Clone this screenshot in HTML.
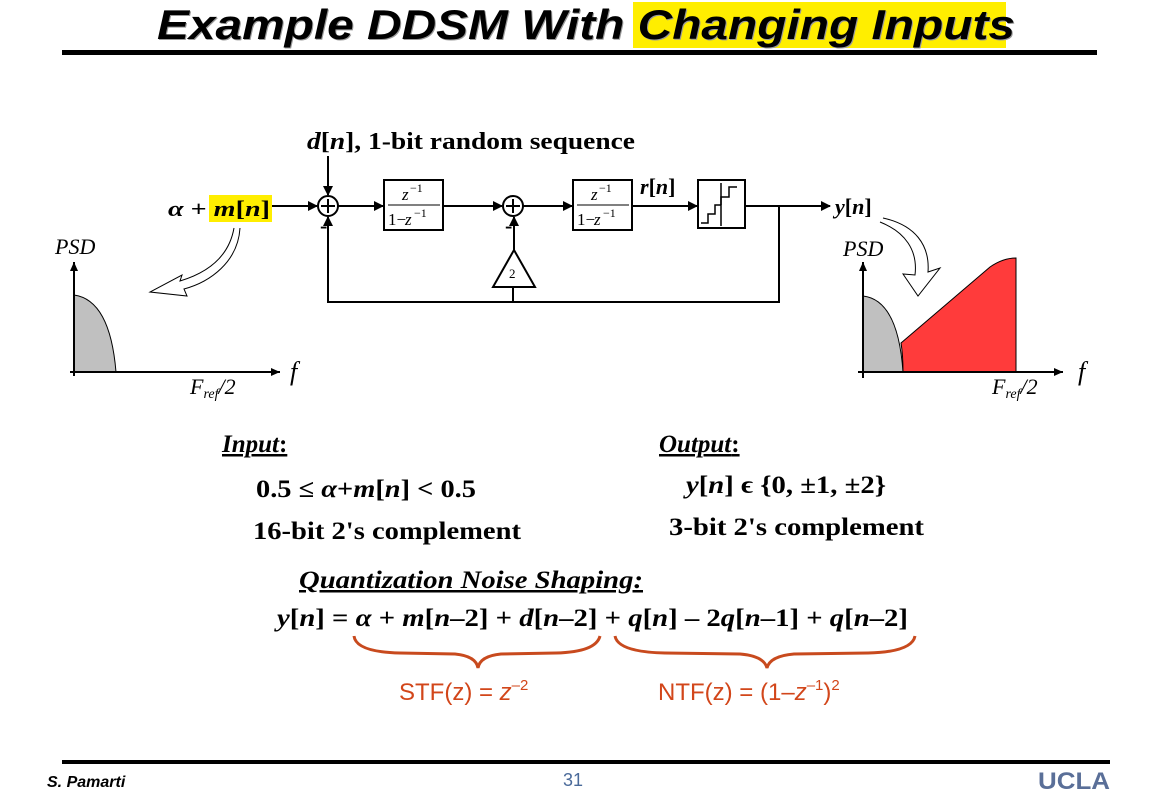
<!DOCTYPE html>
<html><head><meta charset="utf-8"><style>
html,body{margin:0;padding:0;background:#fff;width:1150px;height:804px;overflow:hidden}
svg{display:block}
.s{font-family:"Liberation Serif",serif;font-weight:bold}
.i{font-style:italic}
</style></head><body>
<svg width="1150" height="804" viewBox="0 0 1150 804" xmlns="http://www.w3.org/2000/svg">
<defs>
<marker id="ar" markerWidth="10" markerHeight="10" refX="9" refY="5" orient="auto" markerUnits="userSpaceOnUse"><path d="M0,0 L10,5 L0,10 Z" fill="#000"/></marker>
<marker id="as" markerWidth="10" markerHeight="10" refX="9" refY="4" orient="auto" markerUnits="userSpaceOnUse"><path d="M0,0 L9,4 L0,8 Z" fill="#000"/></marker>
</defs>
<!-- Title -->
<rect x="633" y="2" width="373" height="46" fill="#ffee00"/>
<text x="158" y="40" font-family="Liberation Sans,sans-serif" font-weight="bold" font-style="italic" font-size="42" fill="#999" textLength="858" lengthAdjust="spacingAndGlyphs">Example DDSM With Changing Inputs</text>
<text x="157" y="39" font-family="Liberation Sans,sans-serif" font-weight="bold" font-style="italic" font-size="42" fill="#000" textLength="858" lengthAdjust="spacingAndGlyphs">Example DDSM With Changing Inputs</text>
<rect x="62" y="50" width="1035" height="5" fill="#000"/>

<!-- Block diagram -->
<text x="307" y="149" class="s" font-size="24" textLength="328" lengthAdjust="spacingAndGlyphs"><tspan class="i">d</tspan>[<tspan class="i">n</tspan>], 1-bit random sequence</text>
<line x1="328" y1="156" x2="328" y2="195" stroke="#000" stroke-width="2" marker-end="url(#ar)"/>
<rect x="209" y="195" width="63" height="27" fill="#ffee00"/>
<text x="168" y="216" class="s" font-size="22" textLength="102" lengthAdjust="spacingAndGlyphs"><tspan class="i">α</tspan> + <tspan class="i">m</tspan>[<tspan class="i">n</tspan>]</text>
<g stroke="#000" stroke-width="2" fill="none">
<line x1="272" y1="206" x2="317" y2="206" marker-end="url(#ar)"/>
<circle cx="328" cy="206" r="10"/>
<line x1="321" y1="206" x2="335" y2="206"/><line x1="328" y1="199" x2="328" y2="213"/>
<line x1="338" y1="206" x2="383" y2="206" marker-end="url(#ar)"/>
<rect x="384" y="180" width="59" height="50"/>
<line x1="443" y1="206" x2="502" y2="206" marker-end="url(#ar)"/>
<circle cx="513" cy="206" r="10"/>
<line x1="506" y1="206" x2="520" y2="206"/><line x1="513" y1="199" x2="513" y2="213"/>
<line x1="523" y1="206" x2="572" y2="206" marker-end="url(#ar)"/>
<rect x="573" y="180" width="59" height="50"/>
<line x1="632" y1="206" x2="697" y2="206" marker-end="url(#ar)"/>
<rect x="698" y="180" width="47" height="48"/>
<line x1="745" y1="206" x2="830" y2="206" marker-end="url(#ar)"/>
<polyline points="779,206 779,302 328,302 328,217" marker-end="url(#ar)"/>
<line x1="513" y1="302" x2="513" y2="287"/>
<polygon points="493,287 535,287 514,250"/>
<line x1="514" y1="250" x2="514" y2="217" marker-end="url(#ar)"/>
<path d="M701,223 h7 v-9 h7 v-9 h6" stroke-width="1.5"/>
<path d="M721,205 v-8 h8 v-10 h8" stroke-width="1.5"/>
<line x1="721" y1="183" x2="721" y2="226" stroke-width="1.5"/>
<line x1="388" y1="205" x2="440" y2="205" stroke-width="1"/>
<line x1="577" y1="205" x2="629" y2="205" stroke-width="1"/>
</g>
<text x="320" y="233" class="s" font-size="22">-</text>
<text x="505" y="233" class="s" font-size="22">-</text>
<g font-family="Liberation Serif,serif" font-size="17">
<text x="402" y="200" font-style="italic">z</text><text x="410" y="192" font-size="12">−1</text>
<text x="388" y="225">1−</text><text x="405" y="225" font-style="italic">z</text><text x="414" y="217" font-size="12">−1</text>
<text x="591" y="200" font-style="italic">z</text><text x="599" y="192" font-size="12">−1</text>
<text x="577" y="225">1−</text><text x="594" y="225" font-style="italic">z</text><text x="603" y="217" font-size="12">−1</text>
<text x="509" y="278" font-size="13">2</text>
</g>
<text x="640" y="194" class="s" font-size="22"><tspan class="i">r</tspan>[<tspan class="i">n</tspan>]</text>
<text x="835" y="214" class="s" font-size="22"><tspan class="i">y</tspan>[<tspan class="i">n</tspan>]</text>

<!-- Left PSD -->
<path d="M74,372 V295 Q110,300 116,372 Z" fill="#c0c0c0" stroke="#000" stroke-width="1"/>
<line x1="74" y1="376" x2="74" y2="262" stroke="#000" stroke-width="2" marker-end="url(#as)"/>
<line x1="70" y1="372" x2="280" y2="372" stroke="#000" stroke-width="2" marker-end="url(#as)"/>
<text x="55" y="254" font-family="Liberation Serif,serif" font-style="italic" font-size="22">PSD</text>
<text x="290" y="380" font-family="Liberation Serif,serif" font-style="italic" font-size="26">f</text>
<text x="190" y="394" font-family="Liberation Serif,serif" font-style="italic" font-size="22">F<tspan font-size="14" dy="4">ref</tspan><tspan dy="-4">/2</tspan></text>
<path d="M234,228 C228,262 200,275 180,281 L182,275 L150,292 L187,296 L184,289 C210,282 238,262 240,228" fill="#fff" stroke="#000" stroke-width="1"/>

<!-- Right PSD -->
<path d="M863,372 V296 Q898,300 903,372 Z" fill="#c0c0c0" stroke="#000" stroke-width="1"/>
<path d="M901,343 L990,267 Q1003,258 1016,258 V372 H903 Q903,355 901,343 Z" fill="#ff3b3b" stroke="#000" stroke-width="1"/>
<line x1="863" y1="378" x2="863" y2="262" stroke="#000" stroke-width="2" marker-end="url(#as)"/>
<line x1="858" y1="372" x2="1063" y2="372" stroke="#000" stroke-width="2" marker-end="url(#as)"/>
<text x="843" y="256" font-family="Liberation Serif,serif" font-style="italic" font-size="22">PSD</text>
<text x="1078" y="380" font-family="Liberation Serif,serif" font-style="italic" font-size="26">f</text>
<text x="992" y="394" font-family="Liberation Serif,serif" font-style="italic" font-size="22">F<tspan font-size="14" dy="4">ref</tspan><tspan dy="-4">/2</tspan></text>
<path d="M883,218 C915,225 930,245 928,272 L940,268 L918,296 L903,274 L915,275 C918,250 905,232 880,222" fill="#fff" stroke="#000" stroke-width="1"/>

<!-- Text -->
<g class="s" font-size="25">
<text x="222" y="452" class="i" text-decoration="underline">Input<tspan font-style="normal" text-decoration="none">:</tspan></text>
<text x="256" y="497" textLength="220" lengthAdjust="spacingAndGlyphs">0.5 ≤ <tspan class="i">α</tspan>+<tspan class="i">m</tspan>[<tspan class="i">n</tspan>] &lt; 0.5</text>
<text x="253" y="539" textLength="268" lengthAdjust="spacingAndGlyphs">16-bit 2's complement</text>
<text x="659" y="452" class="i" text-decoration="underline">Output<tspan font-style="normal" text-decoration="none">:</tspan></text>
<text x="686" y="493" textLength="200" lengthAdjust="spacingAndGlyphs"><tspan class="i">y</tspan>[<tspan class="i">n</tspan>] ϵ {0, ±1, ±2}</text>
<text x="669" y="535" textLength="255" lengthAdjust="spacingAndGlyphs">3-bit 2's complement</text>
<text x="299" y="588" class="i" text-decoration="underline" textLength="344" lengthAdjust="spacingAndGlyphs">Quantization Noise Shaping:</text>
<text x="277" y="626" textLength="631" lengthAdjust="spacingAndGlyphs"><tspan class="i">y</tspan>[<tspan class="i">n</tspan>] = <tspan class="i">α</tspan> + <tspan class="i">m</tspan>[<tspan class="i">n</tspan>–2] + <tspan class="i">d</tspan>[<tspan class="i">n</tspan>–2] + <tspan class="i">q</tspan>[<tspan class="i">n</tspan>] – 2<tspan class="i">q</tspan>[<tspan class="i">n</tspan>–1] + <tspan class="i">q</tspan>[<tspan class="i">n</tspan>–2]</text>
</g>
<g fill="none" stroke="#c84a1e" stroke-width="3">
<path d="M354,636 Q356,652 400,653 L455,654 Q476,656 478,668 Q480,656 501,654 L556,653 Q596,652 600,636"/>
<path d="M615,636 Q618,652 665,653 L740,654 Q764,656 767,668 Q770,656 794,654 L868,653 Q912,652 915,636"/>
</g>
<g font-family="Liberation Sans,sans-serif" font-size="24" fill="#d2461a">
<text x="399" y="700">STF(z) = <tspan font-style="italic">z</tspan><tspan font-size="15" dy="-10">–2</tspan></text>
<text x="658" y="700">NTF(z) = (1–<tspan font-style="italic">z</tspan><tspan font-size="15" dy="-10">–1</tspan><tspan dy="10">)</tspan><tspan font-size="15" dy="-10">2</tspan></text>
</g>

<!-- Footer -->
<rect x="62" y="760" width="1048" height="4" fill="#000"/>
<text x="47" y="787" font-family="Liberation Sans,sans-serif" font-weight="bold" font-style="italic" font-size="16">S. Pamarti</text>
<text x="563" y="786" font-family="Liberation Sans,sans-serif" font-size="18" fill="#4a6a9a">31</text>
<text x="1038" y="789" font-family="Liberation Sans,sans-serif" font-weight="bold" font-size="24" fill="#5a6f98" textLength="72" lengthAdjust="spacingAndGlyphs">UCLA</text>
</svg>
</body></html>
